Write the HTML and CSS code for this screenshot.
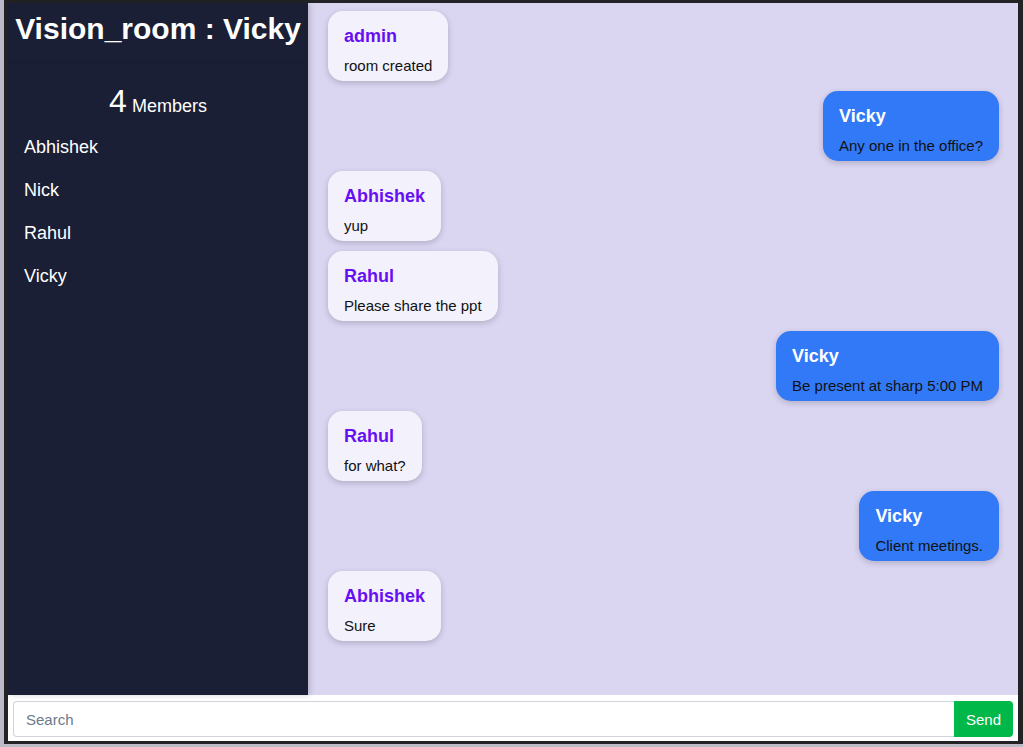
FILE: index.html
```html
<!DOCTYPE html>
<html>
<head>
<meta charset="utf-8">
<title>Vision_room</title>
<link rel="stylesheet" href="styles.css">
</head>
<body>
<div class="modal">
  <div class="main">
    <aside class="sidebar">
      <h2 class="room-title">Vision_room : Vicky</h2>
      <hr class="divider">
      <div class="count"><span class="count-num">4</span> Members</div>
      <ul class="members">
        <li>Abhishek</li>
        <li>Nick</li>
        <li>Rahul</li>
        <li>Vicky</li>
      </ul>
    </aside>
    <section class="chat">
      <div class="msg other"><div class="name">admin</div><div class="text">room created</div></div>
      <div class="msg mine"><div class="name">Vicky</div><div class="text">Any one in the office?</div></div>
      <div class="msg other"><div class="name">Abhishek</div><div class="text">yup</div></div>
      <div class="msg other"><div class="name">Rahul</div><div class="text">Please share the ppt</div></div>
      <div class="msg mine"><div class="name">Vicky</div><div class="text">Be present at sharp 5:00 PM</div></div>
      <div class="msg other"><div class="name">Rahul</div><div class="text">for what?</div></div>
      <div class="msg mine"><div class="name">Vicky</div><div class="text">Client meetings.</div></div>
      <div class="msg other"><div class="name">Abhishek</div><div class="text">Sure</div></div>
    </section>
  </div>
  <form class="composer">
    <input class="search" type="text" placeholder="Search">
    <button class="send" type="button">Send</button>
  </form>
</div>
</body>
</html>
```
FILE: styles.css
```css
* { box-sizing: border-box; }
html, body { margin: 0; padding: 0; height: 100%; }
body {
  background: #bcbac6;
  font-family: "Liberation Sans", Arial, sans-serif;
  overflow: hidden;
}
.modal {
  margin-left: 4px;
  width: 1019px;
  height: 744px;
  border-style: solid;
  border-color: #232326;
  border-width: 3px 5px 3px 4px;
  display: flex;
  flex-direction: column;
  background: #fff;
}
.main {
  display: flex;
  height: 692px;
}
.sidebar {
  width: 300px;
  flex: none;
  background: #1b1f35;
  color: #fff;
  position: relative;
  z-index: 1;
  box-shadow: 2px 0 6px rgba(0,0,0,0.18);
}
.room-title {
  margin: 0;
  padding-top: 9px;
  text-align: center;
  font-size: 30px;
  line-height: 34px;
  font-weight: 700;
  white-space: nowrap;
}
.divider {
  margin: 16px 0 0;
  border: 0;
  border-top: 1px solid rgba(0,0,0,0.12);
}
.count {
  text-align: center;
  margin-top: 18px;
  font-size: 18px;
  line-height: 40px;
}
.count-num {
  font-size: 32px;
  font-weight: 300;
}
.members {
  list-style: none;
  margin: 0;
  padding: 0 16px;
}
.members li {
  font-size: 18px;
  line-height: 43px;
}
.chat {
  flex: 1;
  background: #dad6f2;
  padding: 8px 19px 0 20px;
  display: flex;
  flex-direction: column;
  align-items: flex-start;
  gap: 10px;
  overflow: hidden;
}
.msg {
  border-radius: 15px;
  padding: 14px 16px 5px;
  box-shadow: 0 2px 6px rgba(0,0,0,0.2);
}
.msg .name {
  font-size: 18px;
  font-weight: 700;
  line-height: 23px;
  margin-bottom: 8px;
}
.msg .text {
  font-size: 15px;
  line-height: 20px;
  color: #111;
}
.other {
  background: #f3f1fc;
}
.other .name { color: #6610f2; }
.mine {
  align-self: flex-end;
  background: #3179f7;
}
.mine .name { color: #fff; }
.composer {
  margin: 0;
  height: 46px;
  padding: 6px 5px 4px;
  display: flex;
  background: #fff;
}
.search {
  flex: 1;
  height: 36px;
  border: 1px solid #ced4da;
  border-right: 0;
  border-radius: 4px 0 0 4px;
  padding: 0 12px;
  font-family: inherit;
  font-size: 15px;
  color: #333;
  outline: none;
}
.search::placeholder { color: #6c7a8a; }
.send {
  width: 59px;
  height: 36px;
  border: 0;
  border-radius: 0 4px 4px 0;
  background: #00b74a;
  color: #fff;
  font-family: inherit;
  font-size: 15px;
  padding: 0;
}
```
